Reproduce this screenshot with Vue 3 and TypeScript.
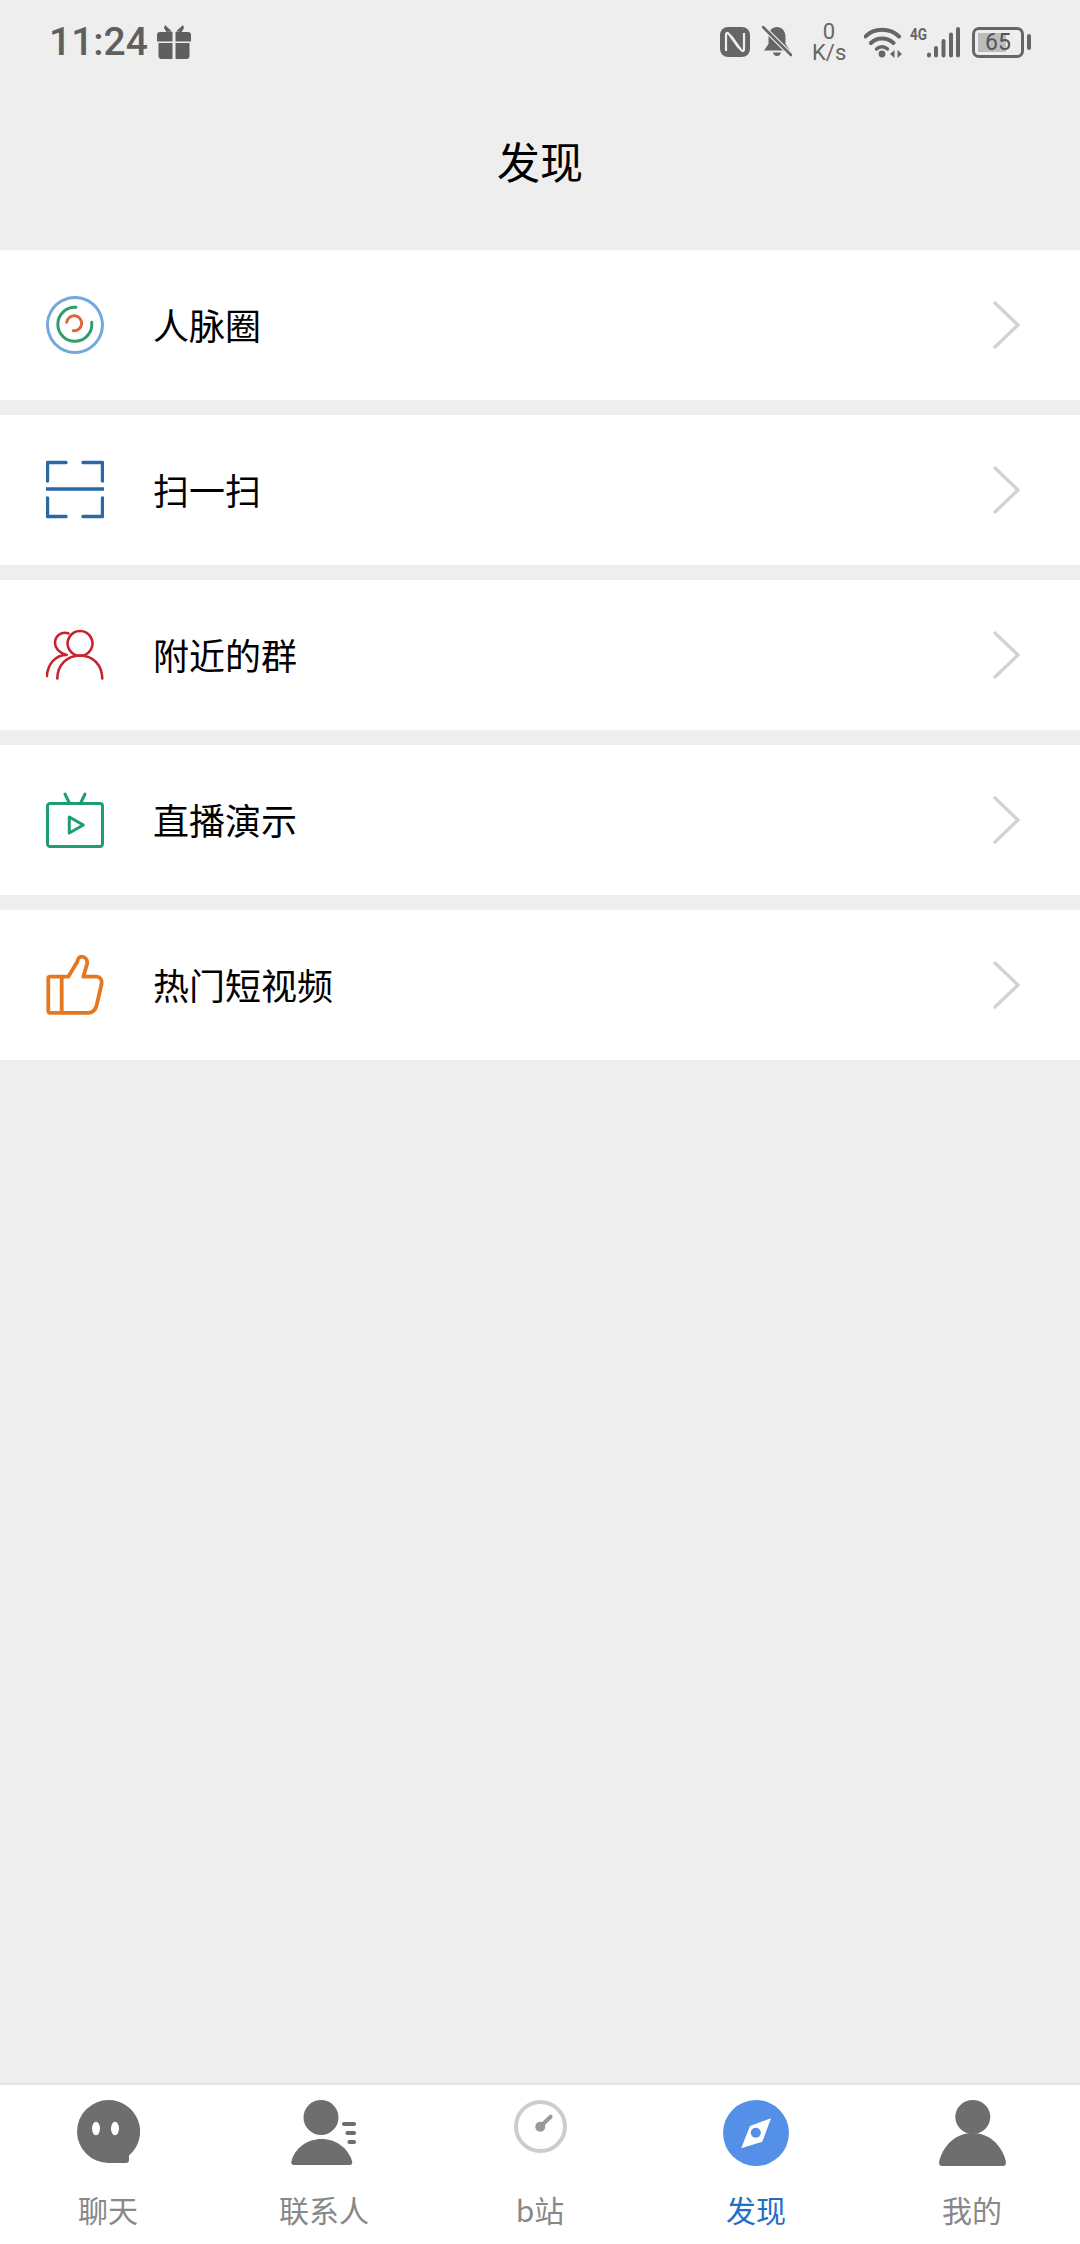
<script setup lang="ts">
interface Stroke {
  d: string;
  color: string;
  width: number;
}

interface Row {
  label: string;
  dy: number;
  strokes: Stroke[];
}

const blue = "#2a69a8";
const red = "#c8232c";
const green = "#1f9d6e";
const orange = "#e5771f";

const rows: Row[] = [
  {
    label: "人脉圈",
    dy: 7,
    strokes: [
      { d: "M29 1.500A27.500 27.500 0 1 1 28.900 1.500Z", color: "#74a9dc", width: 3 },
      { d: "M30 11.300A17 17 0 1 0 45.700 26.300", color: "#2f9e6b", width: 3 },
      { d: "M20.700 26.300A7.500 7.500 0 1 1 27.300 34.700", color: "#e0673a", width: 3 },
    ],
  },
  {
    label: "扫一扫",
    dy: 7,
    strokes: [
      {
        d: "M20 1.500H1.500V20M37 1.500H56.500V20M0 28H58M1.500 37V55.500H20M56.500 37V55.500H37",
        color: blue,
        width: 3.4,
      },
    ],
  },
  {
    label: "附近的群",
    dy: 11,
    strokes: [
      { d: "M34 1A12.400 12.400 0 1 0 34.100 1Z", color: red, width: 2.6 },
      { d: "M11.300 48.500C11.500 35 21 25.500 34 25.500C47 25.500 56 35 56.300 48.500", color: red, width: 2.6 },
      { d: "M22.300 3.300C15 1 9 6 9 13C9 18 13 23 20.700 25C9 25 2 34 .800 46", color: red, width: 2.6 },
    ],
  },
  {
    label: "直播演示",
    dy: 8,
    strokes: [
      {
        d: "M4 11.500H54A2.500 2.500 0 0 1 56.500 14V52A2.500 2.500 0 0 1 54 54.500H4A2.500 2.500 0 0 1 1.500 52V14A2.500 2.500 0 0 1 4 11.500ZM19 2L23.300 11M39 2L34.700 11",
        color: green,
        width: 3,
      },
      { d: "M23.300 25V41L37.300 33Z", color: green, width: 3 },
    ],
  },
  {
    label: "热门短视频",
    dy: 6,
    strokes: [
      {
        d: "M15.700 21.700V57M4 21.700H22.300L31.300 6.700C32 3 34 1.700 35.700 1.700C39 1.700 41.300 4.500 41.300 8.300L37.300 21.700H50.700C54 21.700 56 24.500 55.700 28.300L50.700 50C49.500 55 46.500 57.800 42.300 57.800H4C3 57.800 2.300 57 2.300 56V23.400C2.300 22.400 3 21.700 4 21.700Z",
        color: orange,
        width: 3.8,
      },
    ],
  },
];

const tabs = ["聊天", "联系人", "b站", "发现", "我的"];
</script>

<template>
  <div class="page">
    <div class="status">
      <span class="time">11:24</span>
      <svg class="gift" width="34" height="34" viewBox="0 0 34 34">
        <path d="M8 0L15 6.500L9.500 7L7 3ZM26 0L19 6.500L24.500 7L27 3Z" />
        <path d="M3 7H15.500V16.500H0V10A3 3 0 0 1 3 7ZM18.500 7H31A3 3 0 0 1 34 10V16.500H18.500Z" />
        <path d="M1.500 18H15.500V34H4.500A3 3 0 0 1 1.500 31ZM18.500 18H32.500V31A3 3 0 0 1 29.500 34H18.500Z" />
      </svg>
      <div class="status-right">
        <svg width="30" height="30" viewBox="0 0 30 30">
          <rect width="30" height="30" rx="8" fill="#666" />
          <path
            d="M6 24V8Q6 4.500 9 7L19 21M24 6V22Q24 25.500 21 23L11 9"
            fill="none"
            stroke="#eee"
            stroke-width="2.200"
          />
        </svg>
        <svg class="bell" width="30" height="32" viewBox="0 0 30 32">
          <path
            fill="#666"
            d="M15 1C20 1 23.500 5 23.500 11V18L28 24.500H2L6.500 18V11C6.500 5 10 1 15 1ZM11 26.500H19C18.500 29 17 30 15 30S11.500 29 11 26.500Z"
          />
          <path d="M1 1L29 29" stroke="#eee" stroke-width="5" />
          <path d="M1 1L29 29" stroke="#666" stroke-width="2.600" stroke-linecap="round" />
        </svg>
        <div class="speed">0<br />K/s</div>
        <svg class="wifi" width="38" height="32" viewBox="0 0 38 32">
          <path
            d="M1.500 10.500C10 1.500 26 1.500 35 10.500M7 17C13 11 23 11 29.500 17"
            fill="none"
            stroke="#666"
            stroke-width="4"
            stroke-linecap="round"
          />
          <path d="M12.500 23C15.500 20 20.500 20 23.500 23" fill="none" stroke="#666" stroke-width="3.400" stroke-linecap="round" />
          <circle cx="18" cy="28" r="3.400" fill="#666" />
          <path d="M26 28L30.500 24V32ZM38 28L33.500 24V32Z" fill="#666" />
        </svg>
        <div class="signal">
          <span class="net">4G</span>
          <svg width="33" height="31" viewBox="0 0 33 31">
            <path
              d="M2 28.500V27.500M9 28.500V21M16.500 28.500V14M24 28.500V7.500M31 28.500V2"
              stroke="#666"
              stroke-width="4"
              stroke-linecap="round"
            />
          </svg>
        </div>
        <div class="battery">
          <div class="battery-body">65</div>
          <span class="battery-nub"></span>
        </div>
      </div>
    </div>

    <header class="title">发现</header>

    <main class="list">
      <div v-for="row in rows" :key="row.label" class="row">
        <svg class="row-icon" width="58" height="72" viewBox="0 0 58 72">
          <g :transform="`translate(0 ${row.dy})`">
            <path
              v-for="(s, i) in row.strokes"
              :key="i"
              :d="s.d"
              fill="none"
              :stroke="s.color"
              :stroke-width="s.width"
              stroke-linejoin="round"
              stroke-linecap="round"
            />
          </g>
        </svg>
        <span class="row-label">{{ row.label }}</span>
        <svg class="chevron" width="27" height="48" viewBox="0 0 27 48">
          <path d="M2 2L25 24L2 46" fill="none" stroke="#d2d2d2" stroke-width="3.400" stroke-linecap="round" stroke-linejoin="round" />
        </svg>
      </div>
    </main>

    <nav class="tabbar">
      <div v-for="(tab, i) in tabs" :key="tab" class="tab" :class="{ active: i === 3 }">
        <div class="tab-icon">
          <svg v-if="i === 0" width="63" height="64" viewBox="0 0 63 64">
            <path
              fill="#6e6e6e"
              d="M31.500 0A31.500 31.500 0 0 1 52 55.500V60Q52 63 49 63H31.500A31.500 31.500 0 1 1 31.500 0Z"
            />
            <ellipse cx="19" cy="28.500" rx="4" ry="6.800" fill="#fff" />
            <ellipse cx="38" cy="28.500" rx="4" ry="6.800" fill="#fff" />
          </svg>
          <svg v-else-if="i === 1" width="66" height="66" viewBox="0 0 66 66">
            <circle cx="30" cy="17.500" r="17.500" fill="#6e6e6e" />
            <path fill="#6e6e6e" d="M3 65Q-.500 65 .500 61C4 48 16 39 30.500 39C45 39 57 48 61 61Q62 65 58 65Z" />
            <path d="M53 24H63M56.500 33H63M58.500 42H63" stroke="#6e6e6e" stroke-width="4.200" stroke-linecap="round" />
          </svg>
          <svg v-else-if="i === 2" width="53" height="53" viewBox="0 0 53 53">
            <circle cx="26.500" cy="26.500" r="24.500" fill="none" stroke="#cdcdcd" stroke-width="4" />
            <circle cx="26.300" cy="26.700" r="5" fill="#999" />
            <path d="M27 26L36.600 16.700" stroke="#999" stroke-width="4" stroke-linecap="round" />
          </svg>
          <svg v-else-if="i === 3" width="66" height="66" viewBox="0 0 66 66">
            <circle cx="33" cy="33" r="33" fill="#5590e8" />
            <path d="M48 18.300L39.300 41.700L18.200 48.300L27 26Z" fill="#fff" />
            <circle cx="32.800" cy="32.700" r="5" fill="#5590e8" />
          </svg>
          <svg v-else width="67" height="66" viewBox="0 0 67 66">
            <ellipse cx="33.800" cy="17" rx="17.500" ry="17" fill="#6e6e6e" />
            <path fill="#6e6e6e" d="M3 66Q-1 66 .500 60C5 44 18 33 33.500 33C49 33 62 44 66.500 60Q68 66 64 66Z" />
          </svg>
        </div>
        <span class="tab-label">{{ tab }}</span>
      </div>
    </nav>
  </div>
</template>

<style>
body {
  background: #eeeeee;
}
</style>

<style scoped>
.page {
  width: 1080px;
  height: 2244px;
  display: flex;
  flex-direction: column;
  background: #eeeeee;
  font-family: "Noto Sans CJK SC", "Noto Sans", sans-serif;
  overflow: hidden;
}

.status {
  height: 84px;
  display: flex;
  align-items: center;
  padding: 0 49px;
  color: #5f5f5f;
}

.time {
  font-family: Roboto, sans-serif;
  font-size: 39px;
  font-weight: 500;
}

.gift {
  fill: #5f5f5f;
  margin-left: 9px;
}

.status-right {
  margin-left: auto;
  display: flex;
  align-items: center;
}

.bell {
  margin-left: 12px;
}

.speed {
  width: 34px;
  margin-left: 20px;
  font-family: Roboto, sans-serif;
  font-size: 22px;
  line-height: 21px;
  text-align: center;
  color: #666;
}

.wifi {
  margin-left: 18px;
}

.signal {
  position: relative;
  margin-left: 8px;
  padding-left: 17px;
}

.signal svg {
  display: block;
}

.net {
  position: absolute;
  left: 0;
  top: -2px;
  font-family: Roboto, sans-serif;
  font-size: 17px;
  font-weight: 700;
  line-height: 18px;
  color: #666;
  transform: scaleX(0.8);
  transform-origin: left;
}

.battery {
  display: flex;
  align-items: center;
  margin-left: 12px;
}

.battery-body {
  width: 52px;
  height: 31px;
  box-sizing: border-box;
  border: 3px solid #666;
  border-radius: 7px;
  background: linear-gradient(#bcbcbc, #bcbcbc) 3px 3px / 28px 19px no-repeat;
  font-family: Roboto, sans-serif;
  font-size: 23px;
  line-height: 25px;
  text-align: center;
  color: #555;
}

.battery-nub {
  width: 4px;
  height: 16px;
  margin-left: 3px;
  border-radius: 2px;
  background: #666;
}

.title {
  height: 166px;
  padding-bottom: 14px;
  box-sizing: border-box;
  display: flex;
  align-items: center;
  justify-content: center;
  font-size: 43px;
  color: #000;
}

.list {
  flex: 1;
  display: flex;
  flex-direction: column;
  gap: 15px;
}

.row {
  height: 150px;
  display: flex;
  align-items: center;
  padding: 0 60px 0 46px;
  background: #fff;
}

.row-label {
  margin-left: 49px;
  margin-top: -2px;
  font-size: 36px;
  color: #000;
}

.chevron {
  margin-left: auto;
}

.tabbar {
  height: 161px;
  box-sizing: border-box;
  display: flex;
  padding-top: 15px;
  border-top: 2px solid #e4e4e4;
  background: #fff;
}

.tab {
  flex: 1;
  display: flex;
  flex-direction: column;
  align-items: center;
}

.tab-icon {
  height: 88px;
}

.tab-icon svg {
  display: block;
}

.tab-label {
  font-size: 30px;
  line-height: 42px;
  color: #888;
}

.tab.active .tab-label {
  color: #1e6fc8;
}
</style>
